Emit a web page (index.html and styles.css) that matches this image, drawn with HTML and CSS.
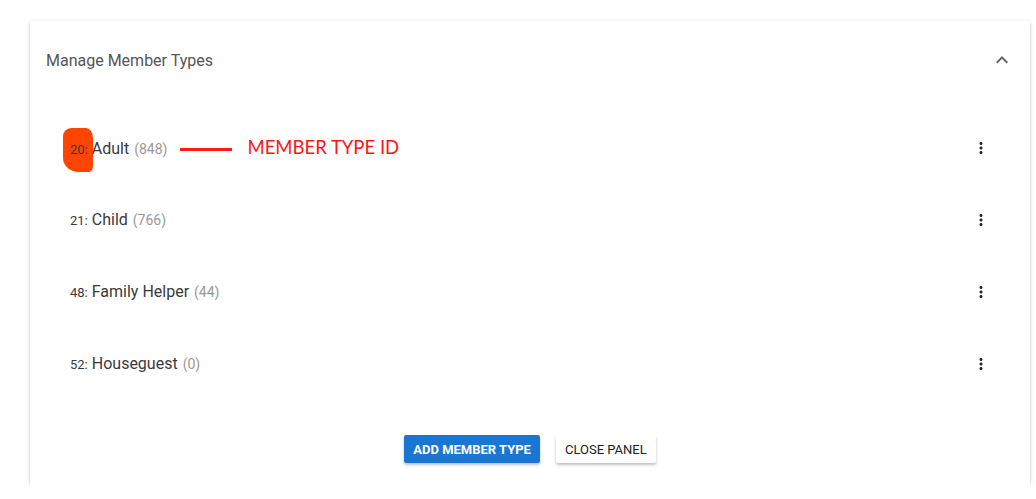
FILE: index.html
```html
<!DOCTYPE html>
<html lang="en">
<head>
  <meta charset="UTF-8">
  <title>Manage Member Types</title>
  <link rel="stylesheet" href="styles.css">
</head>
<body>

  <!-- Member types panel -->
  <div class="panel">
    <div class="panel-header">
      <span class="panel-title">Manage Member Types</span>
      <svg class="chevron" width="24" height="24" viewBox="0 0 24 24"><path d="M7.41 15.41L12 10.83l4.59 4.58L18 14l-6-6-6 6z" fill="#666"/></svg>
    </div>

    <div class="type-list">
      <div class="type-row">
        <span class="blob"></span>
        <div class="type-label">
          <span class="type-id">20:</span><span class="type-name">Adult</span><span class="type-count">(848)</span>
          <span class="note-line"></span>
          <span class="note-text">MEMBER TYPE ID</span>
        </div>
        <svg class="kebab" width="24" height="24" viewBox="0 0 24 24"><path d="M12 8c1.1 0 2-.9 2-2s-.9-2-2-2-2 .9-2 2 .9 2 2 2zm0 2c-1.1 0-2 .9-2 2s.9 2 2 2 2-.9 2-2-.9-2-2-2zm0 6c-1.1 0-2 .9-2 2s.9 2 2 2 2-.9 2-2-.9-2-2-2z" fill="#222" transform="translate(3 3) scale(0.75)"/></svg>
      </div>
      <div class="type-row">
        <div class="type-label">
          <span class="type-id">21:</span><span class="type-name">Child</span><span class="type-count">(766)</span>
        </div>
        <svg class="kebab" width="24" height="24" viewBox="0 0 24 24"><path d="M12 8c1.1 0 2-.9 2-2s-.9-2-2-2-2 .9-2 2 .9 2 2 2zm0 2c-1.1 0-2 .9-2 2s.9 2 2 2 2-.9 2-2-.9-2-2-2zm0 6c-1.1 0-2 .9-2 2s.9 2 2 2 2-.9 2-2-.9-2-2-2z" fill="#222" transform="translate(3 3) scale(0.75)"/></svg>
      </div>
      <div class="type-row">
        <div class="type-label">
          <span class="type-id">48:</span><span class="type-name">Family Helper</span><span class="type-count">(44)</span>
        </div>
        <svg class="kebab" width="24" height="24" viewBox="0 0 24 24"><path d="M12 8c1.1 0 2-.9 2-2s-.9-2-2-2-2 .9-2 2 .9 2 2 2zm0 2c-1.1 0-2 .9-2 2s.9 2 2 2 2-.9 2-2-.9-2-2-2zm0 6c-1.1 0-2 .9-2 2s.9 2 2 2 2-.9 2-2-.9-2-2-2z" fill="#222" transform="translate(3 3) scale(0.75)"/></svg>
      </div>
      <div class="type-row">
        <div class="type-label">
          <span class="type-id">52:</span><span class="type-name">Houseguest</span><span class="type-count">(0)</span>
        </div>
        <svg class="kebab" width="24" height="24" viewBox="0 0 24 24"><path d="M12 8c1.1 0 2-.9 2-2s-.9-2-2-2-2 .9-2 2 .9 2 2 2zm0 2c-1.1 0-2 .9-2 2s.9 2 2 2 2-.9 2-2-.9-2-2-2zm0 6c-1.1 0-2 .9-2 2s.9 2 2 2 2-.9 2-2-.9-2-2-2z" fill="#222" transform="translate(3 3) scale(0.75)"/></svg>
      </div>
    </div>

    <div class="panel-actions">
      <button class="btn primary">ADD MEMBER TYPE</button>
      <button class="btn plain">CLOSE PANEL</button>
    </div>
  </div>

</body>
</html>
```

FILE: styles.css
```css
body {
  margin: 0;
  padding: 21px 6px 0 30px;
  background: #fff;
  font-family: Roboto, "Liberation Sans", sans-serif;
}
.panel {
  width: 1000px;
  background: #fff;
  box-shadow: 0 3px 1px -2px rgba(0,0,0,0.2), 0 2px 2px 0 rgba(0,0,0,0.16), 0 1px 5px 0 rgba(0,0,0,0.12);
  padding-bottom: 21px;
}
.panel-header {
  height: 78px;
  display: flex;
  align-items: center;
  justify-content: space-between;
  padding: 0 16px 0 16px;
}
.panel-title {
  font-size: 16px;
  color: #555;
}
.type-list {
  padding: 13px 37px 0 40px;
}
.type-row {
  position: relative;
  height: 72px;
  display: flex;
  align-items: center;
  justify-content: space-between;
}
.type-label {
  position: relative;
  display: flex;
  align-items: baseline;
  white-space: pre;
  color: #3a3a3a;
  line-height: 20px;
}
.type-id {
  font-size: 13px;
}
.type-name {
  font-size: 16px;
  margin-left: 4px;
}
.type-count {
  font-size: 14px;
  color: #999;
  margin-left: 5px;
}
.blob {
  position: absolute;
  left: -7px;
  top: 16px;
  width: 30px;
  height: 44px;
  background: #ff4500;
  border-radius: 9px 7px 4px 16px / 8px 10px 6px 14px;
}
.note-line {
  align-self: center;
  width: 52px;
  height: 3px;
  background: #ff1a1a;
  margin: 2px 15px 0 13px;
}
.note-text {
  font-family: Lato, "Open Sans", sans-serif;
  font-size: 18.5px;
  line-height: 20px;
  color: #ff1414;
}
.panel-actions {
  display: flex;
  justify-content: center;
  gap: 16px;
  margin-top: 35px;
}
.btn {
  height: 28px;
  border: none;
  border-radius: 2px;
  font-family: Roboto, "Liberation Sans", sans-serif;
  font-size: 13px;
  padding: 0 9px;
  cursor: pointer;
  box-shadow: 0 2px 3px rgba(0,0,0,0.25);
}
.primary {
  background: #1976d2;
  color: #fff;
  font-weight: bold;
}
.plain {
  background: #fff;
  color: #222;
}
```
